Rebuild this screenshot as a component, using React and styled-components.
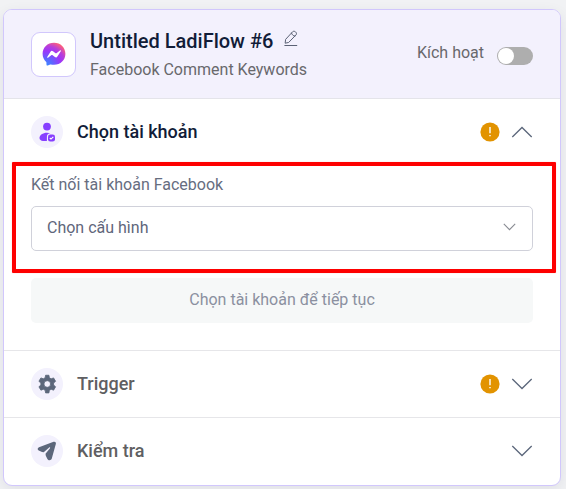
import React from "react";
import styled, { createGlobalStyle } from "styled-components";

const GlobalStyle = createGlobalStyle`
  * { box-sizing: border-box; }
  body {
    margin: 0;
    background: #f1f2f4;
    font-family: Roboto, "Noto Sans", sans-serif;
    overflow: hidden;
  }
`;

const Page = styled.main`
  height: 489px;
  padding: 9px 5px 3px 3px;
`;

const Card = styled.section`
  position: relative;
  height: 477px;
  border: 1px solid #d1c7fc;
  border-radius: 9px;
  background: #fff;
  box-shadow: 0 4px 14px rgba(30, 30, 60, 0.08);
`;

const Header = styled.header`
  display: flex;
  align-items: center;
  height: 89px;
  padding: 0 27px;
  border-bottom: 1px solid #e4e4ea;
  border-radius: 8px 8px 0 0;
  background: #f3f1fd;
`;

const AppIcon = styled.div`
  display: flex;
  align-items: center;
  justify-content: center;
  width: 45px;
  height: 45px;
  margin-right: 14px;
  border: 1px solid #d1c7fc;
  border-radius: 9px;
  background: #fff;
`;

const Heading = styled.div`
  flex: 1;
`;

const TitleRow = styled.div`
  display: flex;
  align-items: center;
  gap: 11px;
  height: 30px;
`;

const Title = styled.h1`
  margin: 0;
  font-size: 20px;
  font-weight: 500;
  line-height: 30px;
  color: #111c38;
`;

const EditIcon = styled.svg`
  margin-top: -5px;
`;

const Subtitle = styled.p`
  margin: 2px 0 0;
  font-size: 16px;
  line-height: 24px;
  color: #68686c;
`;

const ActivateLabel = styled.span`
  margin: -3px 13px 0 0;
  font-size: 16px;
  line-height: 24px;
  color: #68686c;
`;

const Toggle = styled.div`
  width: 36px;
  height: 18px;
  margin-top: 3px;
  padding: 1px;
  border-radius: 9px;
  background: #aeaeae;
`;

const Knob = styled.div`
  width: 16px;
  height: 16px;
  border-radius: 50%;
  background: #fff;
`;

const Step = styled.section`
  height: ${(p) => p.$height}px;
  padding: 0 27px;
  border-bottom: ${(p) => (p.$last ? "none" : "1px solid #e6e6e9")};
`;

const StepHeader = styled.div`
  display: flex;
  align-items: center;
  height: 66px;
`;

const StepIcon = styled.div`
  display: flex;
  align-items: center;
  justify-content: center;
  width: 32px;
  height: 32px;
  margin-right: 14px;
  border-radius: 50%;
  background: #f3f1fd;
`;

const StepTitle = styled.h2`
  flex: 1;
  margin: 0;
  font-size: 18px;
  font-weight: 500;
  line-height: 26px;
  color: ${(p) => (p.$active ? "#111c38" : "#5f5f62")};
`;

const Warning = styled.svg`
  margin-right: 11px;
`;

const Chevron = styled.svg`
  overflow: visible;
  transform: ${(p) => (p.$up ? "rotate(180deg)" : "none")};
`;

const FieldLabel = styled.label`
  display: block;
  margin: 7px 0 9px;
  font-size: 16px;
  line-height: 25px;
  color: #666d7f;
`;

const Select = styled.div`
  display: flex;
  align-items: center;
  justify-content: space-between;
  height: 45px;
  padding: 0 16px 3px 15px;
  border: 1px solid #d0d1da;
  border-radius: 5px;
  font-size: 16px;
  color: #5f667b;
`;

const ContinueButton = styled.button`
  display: block;
  width: 100%;
  height: 45px;
  margin-top: 27px;
  padding: 0 0 2px;
  border: 0;
  border-radius: 5px;
  background: #f6f8f8;
  font: 400 16px Roboto, "Noto Sans", sans-serif;
  color: #8b90a0;
`;

const Highlight = styled.div`
  position: absolute;
  left: 8px;
  top: 152px;
  width: 544px;
  height: 111px;
  border: 4px solid #fe0000;
  border-radius: 1px;
  box-shadow: 0 0 1px rgba(255, 0, 0, 0.4);
  pointer-events: none;
`;

function MessengerIcon() {
  return (
    <svg width="24" height="24" viewBox="0 0 24 24">
      <defs>
        <radialGradient id="messenger" cx="0.16" cy="1" r="1.1">
          <stop offset="0" stopColor="#3b8bff" />
          <stop offset="0.25" stopColor="#5a68ff" />
          <stop offset="0.58" stopColor="#9b36fa" />
          <stop offset="0.78" stopColor="#b83fda" />
          <stop offset="1" stopColor="#ff6078" />
        </radialGradient>
      </defs>
      <path
        fill="url(#messenger)"
        d="M12 .7C5.4.7.6 5.5.6 11.8c0 3.3 1.3 6.2 3.6 8.2.2.2.2.4.2.7l.1 2c0 .7.7 1 1.3.8l2.4-1 .6-.1c1 .3 2.1.4 3.2.4 6.6 0 11.4-4.7 11.4-11S18.600.7 12 .7Z"
      />
      <path
        fill="#fff"
        d="m5.200 15 3.300-5.300a1.700 1.700 0 0 1 2.500-.5l2.600 2a.8.8 0 0 0 .8 0l3.600-2.700c.5-.4 1.100.2.8.7l-3.400 5.300a1.700 1.700 0 0 1-2.500.5l-2.600-2a.8.8 0 0 0-.8 0L6 15.700c-.5.4-1.100-.2-.8-.7Z"
      />
    </svg>
  );
}

function PencilIcon() {
  return (
    <EditIcon width="14" height="17" viewBox="0 0 14 17" fill="none" stroke="#5b6275" strokeLinecap="round" strokeLinejoin="round">
      <path d="M1.200 12.800 1.600 9.400 8.700 1.700c1.500-1.500 4.900 1 3.400 3.100L4.900 12.200ZM7.500 3.100c.6 1.800 1.700 2.800 3.400 3" />
      <path d="M.8 15.500h12" />
    </EditIcon>
  );
}

function UserIcon() {
  return (
    <svg width="18" height="20" viewBox="0 0 18 20" fill="#873fff">
      <circle cx="9" cy="4.600" r="3.900" />
      <path d="M9 10.700c1.400 0 2.500.2 3.500.6-2.200 0-3.600 1.300-3.600 3.500v4.100H5c-2 0-3.500-1.300-3.500-2.900 0-3 3.300-5.300 7.500-5.300Z" />
      <rect x="10" y="12.500" width="7" height="7" rx="2.300" />
      <path d="m11.800 16 1.200 1.100 2.300-2.300" fill="none" stroke="#fff" strokeWidth="1.100" />
    </svg>
  );
}

function GearIcon() {
  return (
    <svg width="20" height="20" viewBox="0 0 24 24">
      <path
        fill="#5c677b"
        fillRule="evenodd"
        stroke="#5c677b"
        strokeWidth="1"
        strokeLinejoin="round"
        d="m10.300 1.500-.5 3-2.200 1.300-2.900-1.100-2.400 4.100 2.400 2v2.500l-2.400 2 2.400 4.100 2.900-1.100 2.200 1.300.5 3.100h4l.5-3.100 2.200-1.300 2.900 1.100 2.400-4.100-2.400-2v-2.500l2.400-2-2.400-4.100L17 5.800l-2.200-1.300-.5-3ZM12.300 8a4 4 0 1 1 0 8 4 4 0 0 1 0-8Z"
      />
    </svg>
  );
}

function SendIcon() {
  return (
    <svg width="20" height="20" viewBox="0 0 20 20">
      <path
        fill="#5c677b"
        d="M2 6.300 16.600.8c1.500-.5 2.500.5 2.300 1.900L14.800 17.500c-.5 1.900-3.400 2.300-4.400.4L8.800 14.700 8.500 12.800 13 7.300c.4-.7-.2-1.200-.8-.8L6.700 11.200 5 11 1.700 9.600C.2 8.700.4 6.900 2 6.300Z"
      />
    </svg>
  );
}

function WarningIcon() {
  return (
    <Warning width="20" height="20" viewBox="0 0 20 20">
      <circle cx="10" cy="10" r="9.600" fill="#e29300" />
      <path d="M10 5v6.300M10 13v1.300" stroke="#fff" strokeWidth="1.400" />
    </Warning>
  );
}

function ChevronIcon({ up }) {
  return (
    <Chevron $up={up} width="22" height="12" viewBox="0 0 22 12" fill="none">
      <path d="m1.300 1 9.700 9.500L20.700 1" stroke="#5c677b" strokeWidth="1.300" />
    </Chevron>
  );
}

export default function App() {
  return (
    <>
      <GlobalStyle />
      <Page>
        <Card>
          <Header>
            <AppIcon><MessengerIcon /></AppIcon>
            <Heading>
              <TitleRow>
                <Title>Untitled LadiFlow #6</Title>
                <PencilIcon />
              </TitleRow>
              <Subtitle>Facebook Comment Keywords</Subtitle>
            </Heading>
            <ActivateLabel>Kích hoạt</ActivateLabel>
            <Toggle><Knob /></Toggle>
          </Header>
          <Step $height={252}>
            <StepHeader>
              <StepIcon><UserIcon /></StepIcon>
              <StepTitle $active>Chọn tài khoản</StepTitle>
              <WarningIcon />
              <ChevronIcon up />
            </StepHeader>
            <FieldLabel>Kết nối tài khoản Facebook</FieldLabel>
            <Select>
              Chọn cấu hình
              <svg width="13" height="8" viewBox="0 0 13 8" fill="none">
                <path d="m.8.9 5.700 5.700L12.200.9" stroke="#888b92" strokeWidth="1.100" />
              </svg>
            </Select>
            <ContinueButton>Chọn tài khoản để tiếp tục</ContinueButton>
          </Step>
          <Step $height={67}>
            <StepHeader>
              <StepIcon><GearIcon /></StepIcon>
              <StepTitle>Trigger</StepTitle>
              <WarningIcon />
              <ChevronIcon />
            </StepHeader>
          </Step>
          <Step $height={67} $last>
            <StepHeader>
              <StepIcon><SendIcon /></StepIcon>
              <StepTitle>Kiểm tra</StepTitle>
              <ChevronIcon />
            </StepHeader>
          </Step>
          <Highlight />
        </Card>
      </Page>
    </>
  );
}
